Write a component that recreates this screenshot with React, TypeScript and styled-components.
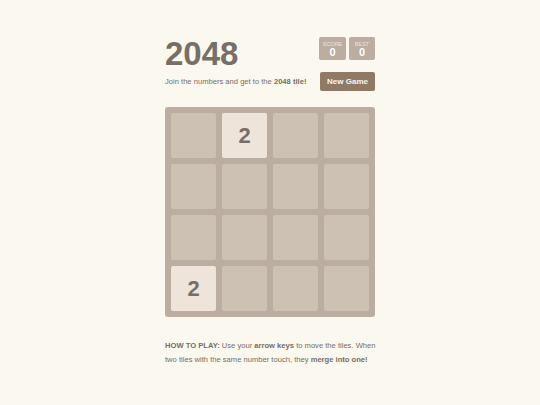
import React from "react"
import styled, { createGlobalStyle } from "styled-components"

const GlobalStyle = createGlobalStyle`
  html, body {
    margin: 0;
    padding: 0;
    background: #faf8ef;
    font-family: "Liberation Sans", Arial, sans-serif;
    color: #776e65;
  }
`

const Container = styled.div`
  width: 210px;
  margin: 0 auto;
  padding-top: 37px;
`

const Header = styled.div`
  display: flex;
  justify-content: space-between;
  align-items: flex-start;
`

const Title = styled.h1`
  margin: 0;
  font-size: 33px;
  line-height: 1;
  font-weight: 700;
  color: #776e65;
`

const Scores = styled.div`
  display: flex;
  gap: 3px;
`

const ScoreBox = styled.div<{ $w: number }>`
  width: ${(p) => p.$w}px;
  height: 23px;
  background: #bbada0;
  border-radius: 2px;
  display: flex;
  flex-direction: column;
  align-items: center;
  padding-top: 4px;
  box-sizing: border-box;
`

const ScoreLabel = styled.div`
  font-size: 5.5px;
  line-height: 6px;
  color: #eee4da;
  text-transform: uppercase;
`

const ScoreValue = styled.div`
  font-size: 11px;
  line-height: 11px;
  font-weight: 700;
  color: #ffffff;
`

const AboveGame = styled.div`
  display: flex;
  justify-content: space-between;
  align-items: center;
  margin-top: 2px;
`

const Intro = styled.p`
  margin: 0;
  font-size: 7.6px;
  color: #776e65;
`

const NewGameButton = styled.button`
  width: 55px;
  height: 19px;
  padding: 0;
  border: none;
  border-radius: 2px;
  background: #8f7a66;
  color: #f9f6f2;
  font-family: "Liberation Sans", Arial, sans-serif;
  font-size: 8px;
  font-weight: 700;
`

const Board = styled.div`
  margin-top: 16px;
  width: 210px;
  height: 210px;
  box-sizing: border-box;
  padding: 6px;
  background: #bbada0;
  border-radius: 3px;
  display: grid;
  grid-template-columns: repeat(4, 45px);
  grid-template-rows: repeat(4, 45px);
  gap: 6px;
`

const Cell = styled.div<{ $value?: number }>`
  border-radius: 2px;
  background: ${(p) => (p.$value ? "#eee4da" : "#cdc1b4")};
  display: flex;
  align-items: center;
  justify-content: center;
  font-size: 22px;
  font-weight: 700;
  color: #776e65;
`

const HowTo = styled.p`
  margin: 22px 0 0;
  width: 230px;
  font-size: 7.6px;
  line-height: 14px;
  color: #776e65;
`

const cells = [0, 2, 0, 0, 0, 0, 0, 0, 0, 0, 0, 0, 2, 0, 0, 0]

export default function App() {
  return (
    <>
      <GlobalStyle />
      <Container>
        <Header>
          <Title>2048</Title>
          <Scores>
            <ScoreBox $w={27}>
              <ScoreLabel>Score</ScoreLabel>
              <ScoreValue>0</ScoreValue>
            </ScoreBox>
            <ScoreBox $w={26}>
              <ScoreLabel>Best</ScoreLabel>
              <ScoreValue>0</ScoreValue>
            </ScoreBox>
          </Scores>
        </Header>
        <AboveGame>
          <Intro>
            Join the numbers and get to the <strong>2048 tile!</strong>
          </Intro>
          <NewGameButton>New Game</NewGameButton>
        </AboveGame>
        <Board>
          {cells.map((v, i) => (
            <Cell key={i} $value={v}>
              {v ? v : null}
            </Cell>
          ))}
        </Board>
        <HowTo>
          <strong>HOW TO PLAY:</strong> Use your <strong>arrow keys</strong> to move the tiles. When
          <br />
          two tiles with the same number touch, they <strong>merge into one!</strong>
        </HowTo>
      </Container>
    </>
  )
}
